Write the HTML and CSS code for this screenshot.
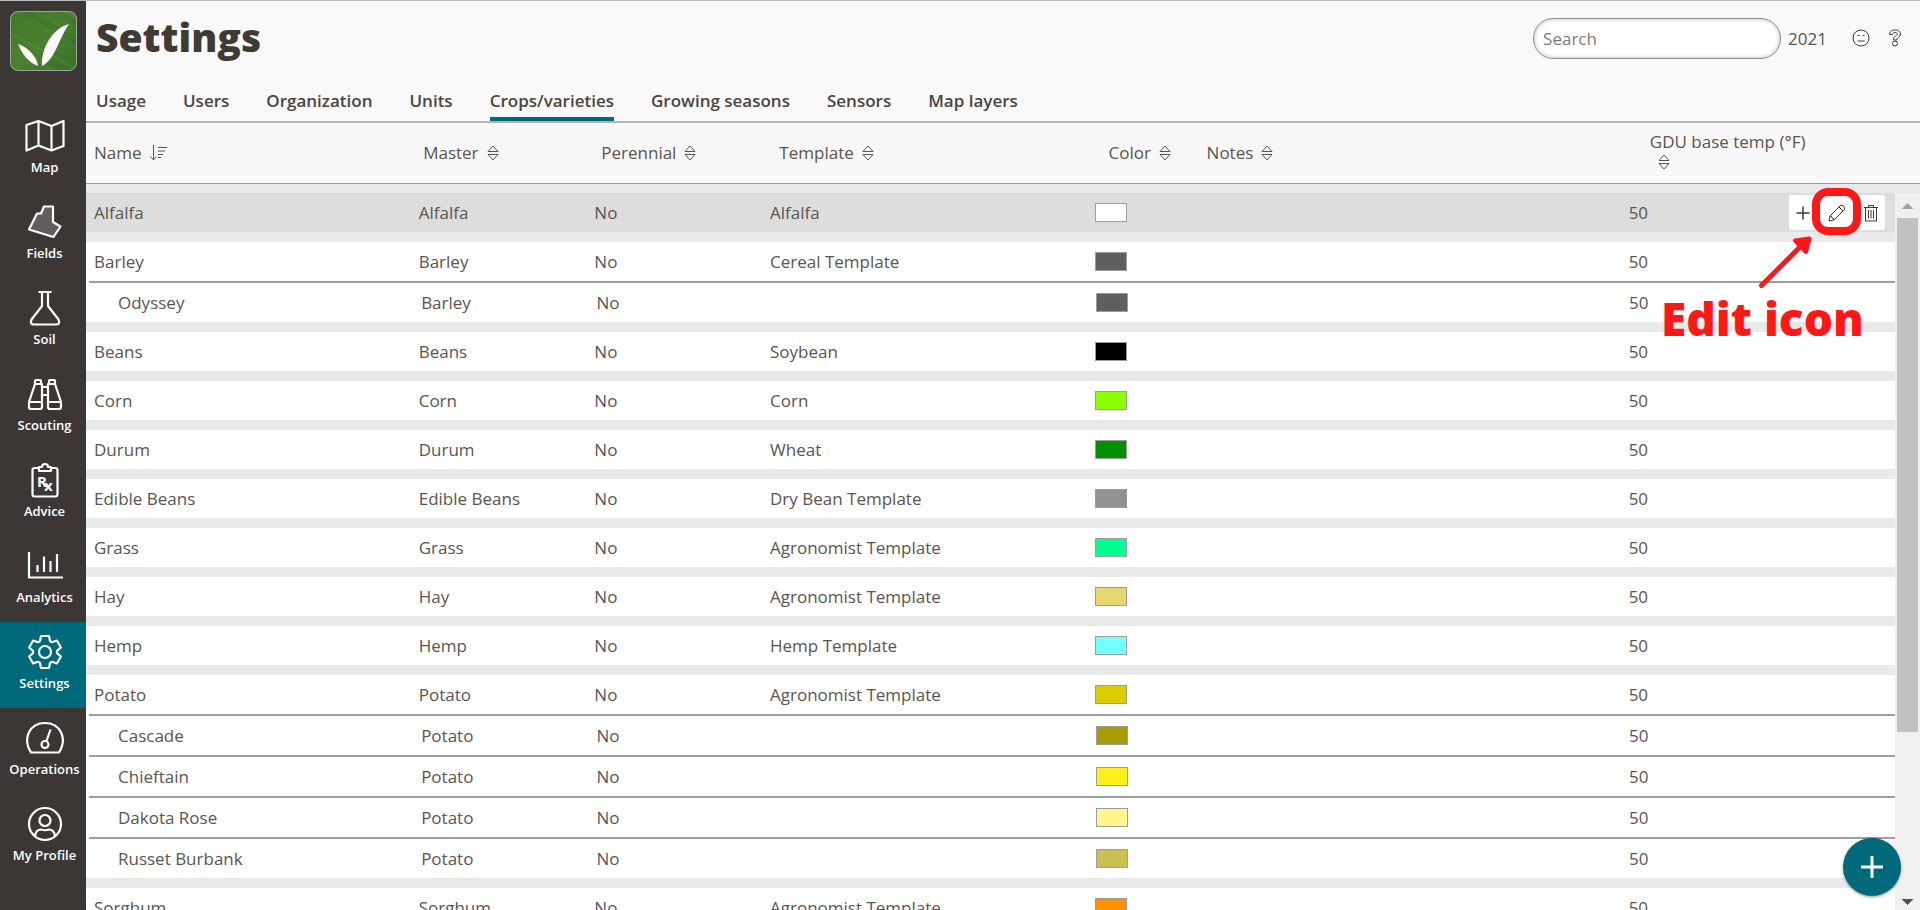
FILE: index.html
```html
<!DOCTYPE html>
<html lang="en">
<head>
  <meta charset="UTF-8">
  <meta name="viewport" content="width=device-width, initial-scale=1.0">
  <title>Settings - Crops/varieties</title>
  <link rel="stylesheet" href="styles.css">
</head>
<body>
  <!-- shared icons -->
  <svg class="defs" aria-hidden="true">
    <symbol id="sort" viewBox="0 0 12 16">
      <path d="M1 6.500 6 1l5 5.500zM1 9.500 6 15l5-5.500z" fill="none" stroke="currentColor"/>
    </symbol>
  </svg>

  <nav class="sidebar">
    <a class="logo" href="#" aria-label="Home">
      <svg viewBox="0 0 67 60">
        <defs>
          <linearGradient id="field" x1="0" y1="0" x2="1" y2="1">
            <stop offset="0" stop-color="#3f7a2b"/>
            <stop offset="0.5" stop-color="#4d8030"/>
            <stop offset="1" stop-color="#35702b"/>
          </linearGradient>
          <clipPath id="logo-clip"><rect width="67" height="60" rx="8"/></clipPath>
        </defs>
        <g clip-path="url(#logo-clip)">
          <rect width="67" height="60" fill="url(#field)"/>
          <path d="M12 0 67 32M17 0 67 28M44 0 67 14M49 0 67 11" stroke="#2c5f24" stroke-width="1" opacity="0.6"/>
          <path d="M0 22 67 58M0 38 45 60" stroke="#5b9a3b" stroke-width="2" opacity="0.3"/>
        </g>
        <rect x="0.500" y="0.500" width="66" height="59" rx="8" fill="none" stroke="#a3a69f"/>
        <path d="M8 33C19 37 27 46 28 55 19 52 12 43 8 33z" fill="#fff"/>
        <path d="M59 13C43 17 31 37 32 55 45 49 49 27 59 13z" fill="#fff"/>
      </svg>
    </a>
    <ul class="menu">
      <li><a href="#">
        <svg viewBox="0 0 40 36"><path d="M1.500 7 13.500 3 26.500 8 38.500 3V28L26.500 32.500 13.500 27.500 1.500 32.500zM13.500 3v24.500M26.500 8v24.500"/></svg>
        Map
      </a></li>
      <li><a href="#">
        <svg viewBox="0 0 40 36"><path class="land" d="M19 2.500h9V18l7.500 4.500-7 10.500L4 25.500 12 9.500h4z"/></svg>
        Fields
      </a></li>
      <li><a href="#">
        <svg viewBox="0 0 40 36"><path d="M13.500 2h13M17 2v14L6.500 29.500Q4.500 34.500 9 34.500h22Q35.500 34.500 33.500 29.500L23 16V2"/></svg>
        Soil
      </a></li>
      <li><a href="#">
        <svg viewBox="0 0 40 36"><path d="M10 8 4 26v5q0 2 2 2h9q2 0 2-2V8zM30 8l6 18v5q0 2-2 2h-9q-2 0-2-2V8zM10 8V5q0-1 1-1h4q1 0 1 1v3M30 8V5q0-1-1-1h-4q-1 0-1 1v3M4 26h13M23 26h13M17 11h6M17 19h6"/></svg>
        Scouting
      </a></li>
      <li><a href="#">
        <svg viewBox="0 0 40 36">
          <path d="M14 6H9.500Q7.500 6 7.500 8v24q0 2.500 2 2.500h21q2 0 2-2.500V8q0-2-2-2H26M14 5v4h12V5h-3q0-3-3-3t-3 3z"/>
          <text x="12" y="25">R</text><text x="19" y="29">x</text>
        </svg>
        Advice
      </a></li>
      <li><a href="#">
        <svg viewBox="0 0 40 36"><path d="M4 4v25.500h34M12.500 17v7M19 8.500V24M25.500 13v11M32 6v18"/></svg>
        Analytics
      </a></li>
      <li><a class="active" href="#">
        <svg viewBox="-20 -18 40 36"><path d="M-5-11-4-16H4L5-11Q6-10 7-9.800L11.900-11.500 15.900-4.500 12-1.200V1.200L15.900 4.500 11.900 11.500 7 9.800Q6 10 5 11L4 16H-4L-5 11Q-6 10-7 9.800L-11.900 11.500-15.900 4.500-12 1.200V-1.200L-15.900-4.500-11.900-11.500-7-9.800Q-6-10-5-11z"/><circle r="6"/></svg>
        Settings
      </a></li>
      <li><a href="#">
        <svg viewBox="0 0 40 36"><path d="M6 32.500C-3 18 5 3 20 3s23 15 14 29.500zM21.500 21 25.500 9.500"/><circle cx="20" cy="24.500" r="3.500"/></svg>
        Operations
      </a></li>
      <li><a href="#">
        <svg viewBox="0 0 40 36"><circle cx="20" cy="18" r="16"/><circle cx="20" cy="14.500" r="5.500"/><path d="M10 30q1-6.500 6-6.500 4 1.500 8 0 5 0 6 6.500"/></svg>
        My Profile
      </a></li>
    </ul>
  </nav>

  <main class="page">
    <header>
      <h1>Settings</h1>
      <div class="tools">
        <input type="search" class="search" placeholder="Search" aria-label="Search">
        <button class="year">2021</button>
        <button class="icon-btn" aria-label="Feedback">
          <svg viewBox="0 0 18 18"><circle cx="9" cy="9" r="8"/><path d="M5.500 12h7M5.500 6.500h2M10.500 6.500h2"/></svg>
        </button>
        <button class="icon-btn" aria-label="Help">
          <svg viewBox="0 0 18 18"><path d="M3.500 5.500C3.500-.5 14.500-.5 14.500 5c0 3.500-4 3.500-4 6h-3c0-4.500 4-4 4-6 0-2-5-2-5 .5z"/><circle cx="9" cy="14.500" r="2.500"/></svg>
        </button>
      </div>
    </header>

    <nav class="tabs">
      <a href="#">Usage</a>
      <a href="#">Users</a>
      <a href="#">Organization</a>
      <a href="#">Units</a>
      <a class="active" href="#">Crops/varieties</a>
      <a href="#">Growing seasons</a>
      <a href="#">Sensors</a>
      <a href="#">Map layers</a>
    </nav>

    <div class="list">
      <table>
        <thead>
          <tr>
            <th><button>Name<svg class="sorted" viewBox="0 0 17 16"><path d="M3.500 0v14M0.500 11.500l3 3.500 3-3.500M8 2.500h9M8 6h7M8 9.500h5M8 12.500h3" fill="none" stroke="currentColor"/></svg></button></th>
            <th><button>Master<svg class="sort"><use href="#sort"/></svg></button></th>
            <th><button>Perennial<svg class="sort"><use href="#sort"/></svg></button></th>
            <th><button>Template<svg class="sort"><use href="#sort"/></svg></button></th>
            <th><button>Color<svg class="sort"><use href="#sort"/></svg></button></th>
            <th><button>Notes<svg class="sort"><use href="#sort"/></svg></button></th>
            <th class="gdu"><button>GDU base temp (°F) <svg class="sort"><use href="#sort"/></svg></button></th>
          </tr>
        </thead>
        <tbody>
          <tr class="hover">
            <td>Alfalfa</td><td>Alfalfa</td><td>No</td><td>Alfalfa</td><td><span class="swatch" style="background:#ffffff"></span></td><td></td>
            <td>50
              <div class="actions">
                <button aria-label="Add variety"><svg viewBox="0 0 18 18"><path d="M9 2.500v13M2.500 9h13" stroke-width="1.500"/></svg></button>
                <button aria-label="Edit"><svg viewBox="0 0 18 18"><path d="M1 17 2 12 12.500 1.500Q14 .5 15.500 2T16.500 5.500L6 16zM2 12q2 0 2 2 2 0 2 2M11 3l4 4"/></svg></button>
                <button aria-label="Delete"><svg viewBox="0 0 18 18"><path d="M2 3.500h14M6.500 3.500V1.500h5v2M3.500 3.500V17h11V3.500M6.500 6v8.500M9 6v8.500M11.500 6v8.500"/></svg></button>
              </div>
            </td>
          </tr>
          <tr><td>Barley</td><td>Barley</td><td>No</td><td>Cereal Template</td><td><span class="swatch" style="background:#5f5f5f"></span></td><td></td><td>50</td></tr>
          <tr class="variety"><td>Odyssey</td><td>Barley</td><td>No</td><td></td><td><span class="swatch" style="background:#5f5f5f"></span></td><td></td><td>50</td></tr>
          <tr><td>Beans</td><td>Beans</td><td>No</td><td>Soybean</td><td><span class="swatch" style="background:#000000"></span></td><td></td><td>50</td></tr>
          <tr><td>Corn</td><td>Corn</td><td>No</td><td>Corn</td><td><span class="swatch" style="background:#8cff00"></span></td><td></td><td>50</td></tr>
          <tr><td>Durum</td><td>Durum</td><td>No</td><td>Wheat</td><td><span class="swatch" style="background:#009000"></span></td><td></td><td>50</td></tr>
          <tr><td>Edible Beans</td><td>Edible Beans</td><td>No</td><td>Dry Bean Template</td><td><span class="swatch" style="background:#919191"></span></td><td></td><td>50</td></tr>
          <tr><td>Grass</td><td>Grass</td><td>No</td><td>Agronomist Template</td><td><span class="swatch" style="background:#00ff91"></span></td><td></td><td>50</td></tr>
          <tr><td>Hay</td><td>Hay</td><td>No</td><td>Agronomist Template</td><td><span class="swatch" style="background:#e6d76e"></span></td><td></td><td>50</td></tr>
          <tr><td>Hemp</td><td>Hemp</td><td>No</td><td>Hemp Template</td><td><span class="swatch" style="background:#73ffff"></span></td><td></td><td>50</td></tr>
          <tr><td>Potato</td><td>Potato</td><td>No</td><td>Agronomist Template</td><td><span class="swatch" style="background:#dccd00"></span></td><td></td><td>50</td></tr>
          <tr class="variety"><td>Cascade</td><td>Potato</td><td>No</td><td></td><td><span class="swatch" style="background:#a79b00"></span></td><td></td><td>50</td></tr>
          <tr class="variety"><td>Chieftain</td><td>Potato</td><td>No</td><td></td><td><span class="swatch" style="background:#fff01c"></span></td><td></td><td>50</td></tr>
          <tr class="variety"><td>Dakota Rose</td><td>Potato</td><td>No</td><td></td><td><span class="swatch" style="background:#fff78e"></span></td><td></td><td>50</td></tr>
          <tr class="variety"><td>Russet Burbank</td><td>Potato</td><td>No</td><td></td><td><span class="swatch" style="background:#c9c051"></span></td><td></td><td>50</td></tr>
          <tr><td>Sorghum</td><td>Sorghum</td><td>No</td><td>Agronomist Template</td><td><span class="swatch" style="background:#ff9100"></span></td><td></td><td>50</td></tr>
        </tbody>
      </table>
      <div class="scrollbar" aria-hidden="true">
        <span class="up"></span>
        <div class="track"><div class="thumb"></div></div>
        <span class="down"></span>
      </div>
    </div>

    <button class="fab" aria-label="Add crop">
      <svg viewBox="0 0 24 24"><path d="M12 1v22M1 12h22"/></svg>
    </button>
  </main>

  <!-- help callout pointing at the edit button -->
  <div class="callout">
    <svg viewBox="0 0 204 104">
      <rect x="155" y="4" width="41" height="39" rx="12" fill="none" stroke="#ff1616" stroke-width="8"/>
      <path d="M100.500 97.500 141 57" stroke="#ff1616" stroke-width="5" stroke-linecap="round"/>
      <path d="M134 52.500 148.500 50.500 145 64z" fill="#ff1616" stroke="#ff1616" stroke-width="4" stroke-linejoin="round"/>
    </svg>
    <p>Edit icon</p>
  </div>
</body>
</html>
```
FILE: styles.css
```css
* {
  box-sizing: border-box;
}
body {
  display: flex;
  height: 100vh;
  margin: 0;
  border-top: 1px solid #b9b9b9;
  font-family: "Open Sans", sans-serif;
  font-size: 17px;
  font-weight: 400;
  color: #5a554f;
  background: #f9f9f9;
  overflow: hidden;
}
button {
  padding: 0;
  border: 0;
  background: none;
  font: inherit;
  color: inherit;
  cursor: pointer;
}
a {
  color: inherit;
  text-decoration: none;
}
.defs {
  position: absolute;
  width: 0;
  height: 0;
}

/* sidebar */
.sidebar {
  flex: none;
  width: 86px;
  background: #3c3735;
  color: #fff;
}
.logo {
  display: block;
  width: 67px;
  margin: 10px 10px 35px;
}
.logo svg {
  display: block;
  width: 67px;
  height: 60px;
}
.menu {
  list-style: none;
  margin: 0;
  padding: 0;
}
.menu a {
  display: flex;
  flex-direction: column;
  align-items: center;
  gap: 4px;
  height: 86px;
  padding: 12px 0 0 3px;
  font-size: 13px;
  line-height: 18px;
  font-weight: 600;
  white-space: nowrap;
}
.menu a.active {
  background: #00697a;
}
.menu svg {
  width: 40px;
  height: 36px;
  fill: none;
  stroke: #fff;
  stroke-width: 2.2;
  stroke-linejoin: round;
}
.menu .land {
  fill: #605e5d;
}
.menu text {
  fill: #fff;
  stroke: none;
  font-size: 15px;
  font-weight: 700;
}

/* header */
.page {
  position: relative;
  flex: 1;
  min-width: 0;
  display: flex;
  flex-direction: column;
}
header {
  display: flex;
  justify-content: space-between;
  height: 80px;
  padding: 8px 16px 0 10px;
}
h1 {
  margin: 0;
  font-size: 39px;
  line-height: 56px;
  font-weight: 800;
  color: #3f3a34;
}
.tools {
  display: flex;
  align-items: center;
  height: 58px;
}
.search {
  width: 248px;
  height: 41px;
  margin-right: 7px;
  padding: 0 9px;
  border: 1px solid #8f8f8f;
  border-radius: 20px;
  box-shadow: inset 0 0 4px #b5b5b5;
  background: #fff;
  font: inherit;
}
.search::placeholder {
  color: #7f7b77;
}
.year {
  margin-right: 25px;
}
.icon-btn {
  margin-right: 16px;
}
.icon-btn:last-child {
  margin-right: 0;
}
.icon-btn svg {
  display: block;
  width: 18px;
  height: 18px;
  fill: none;
  stroke: #3f3a34;
}

/* tabs */
.tabs {
  display: flex;
  gap: 37px;
  height: 42px;
  padding-left: 10px;
  border-bottom: 2px solid #b3b3b3;
  font-weight: 600;
  color: #4b4640;
}
.tabs a {
  padding-top: 8px;
  line-height: 24px;
  border-bottom: 4px solid transparent;
}
.tabs a.active {
  border-color: #00697a;
}

/* crop list, the table runs under the scrollbar column */
.list {
  flex: 1;
  min-height: 0;
  display: grid;
  grid-template-columns: minmax(0, 1fr) 25px;
  grid-template-rows: minmax(0, 1fr);
  background: #e9e9e9;
}
table {
  grid-area: 1 / 1 / 2 / 3;
  display: flex;
  flex-direction: column;
  overflow: hidden;
}
tr {
  display: grid;
  grid-template-columns: 329fr 178fr 178fr 329fr 98fr 443fr 278fr;
  align-items: center;
}
th, td {
  min-width: 0;
  padding: 0 0 0 8px;
  font-weight: inherit;
  text-align: left;
}
thead tr {
  height: 61px;
  padding-bottom: 2px;
  background: #f8f8f8;
  border-bottom: 1px solid #9d9d9d;
}
th button {
  text-align: left;
  line-height: 20px;
}
.gdu {
  padding-right: 100px;
}
.sort, .sorted {
  width: 12px;
  height: 16px;
  margin-left: 8px;
  vertical-align: -2px;
}
.sorted {
  width: 17px;
}
tbody {
  margin: -1px 25px 0 0;
}
tbody tr {
  height: 39px;
  margin-top: 10px;
  background: #fff;
}
tbody tr.hover {
  background: #ddd;
}
tbody td:last-child {
  display: flex;
  align-items: center;
  justify-content: space-between;
  padding-right: 10px;
}
tbody td {
  line-height: 24px;
}
/* varieties hang off the crop above, with a rule between */
tbody tr.variety {
  height: 41px;
  margin: 0 0 0 3px;
  border-top: 2px solid #9d9d9d;
  box-shadow: -3px 0 #fff;
}
.variety td:first-child {
  padding-left: 29px;
}
.swatch {
  display: block;
  width: 32px;
  height: 19px;
  border: 1px solid #9d9d9d;
}
.actions {
  display: flex;
  justify-content: space-between;
  width: 96px;
  height: 35px;
  padding: 0 5px;
  border-radius: 3px;
  background: #fff;
}
.actions svg {
  display: block;
  width: 18px;
  height: 18px;
  fill: none;
  stroke: #3f3a34;
}

.scrollbar {
  grid-area: 1 / 2;
  display: flex;
  flex-direction: column;
  align-items: center;
  margin-top: 70px;
  background: #f0f0f0;
}
.track {
  flex: 1;
  width: 21px;
}
.thumb {
  height: 76%;
  background: #c1c1c1;
}
.up, .down {
  width: 12px;
  height: 6px;
  background: #a3a3a3;
  clip-path: polygon(50% 0, 100% 100%, 0 100%);
}
.up {
  margin: 10px 0 9px;
}
.down {
  margin: 5px 0;
  background: #505050;
  clip-path: polygon(0 0, 100% 0, 50% 100%);
}

.fab {
  position: absolute;
  right: 19px;
  bottom: 14px;
  display: flex;
  align-items: center;
  justify-content: center;
  width: 58px;
  height: 58px;
  border-radius: 50%;
  background: #00697a;
  box-shadow: 0 1px 3px rgba(0,0,0,0.4);
}
.fab svg {
  width: 24px;
  height: 24px;
  stroke: #fff;
  stroke-width: 3;
}

.callout {
  position: absolute;
  top: 188px;
  right: 55px;
  width: 204px;
  color: #ff1616;
  pointer-events: none;
}
.callout svg {
  display: block;
  width: 204px;
  height: 104px;
}
.callout p {
  margin: 0;
  font-size: 46px;
  line-height: 52px;
  font-weight: 800;
  white-space: nowrap;
}
```
